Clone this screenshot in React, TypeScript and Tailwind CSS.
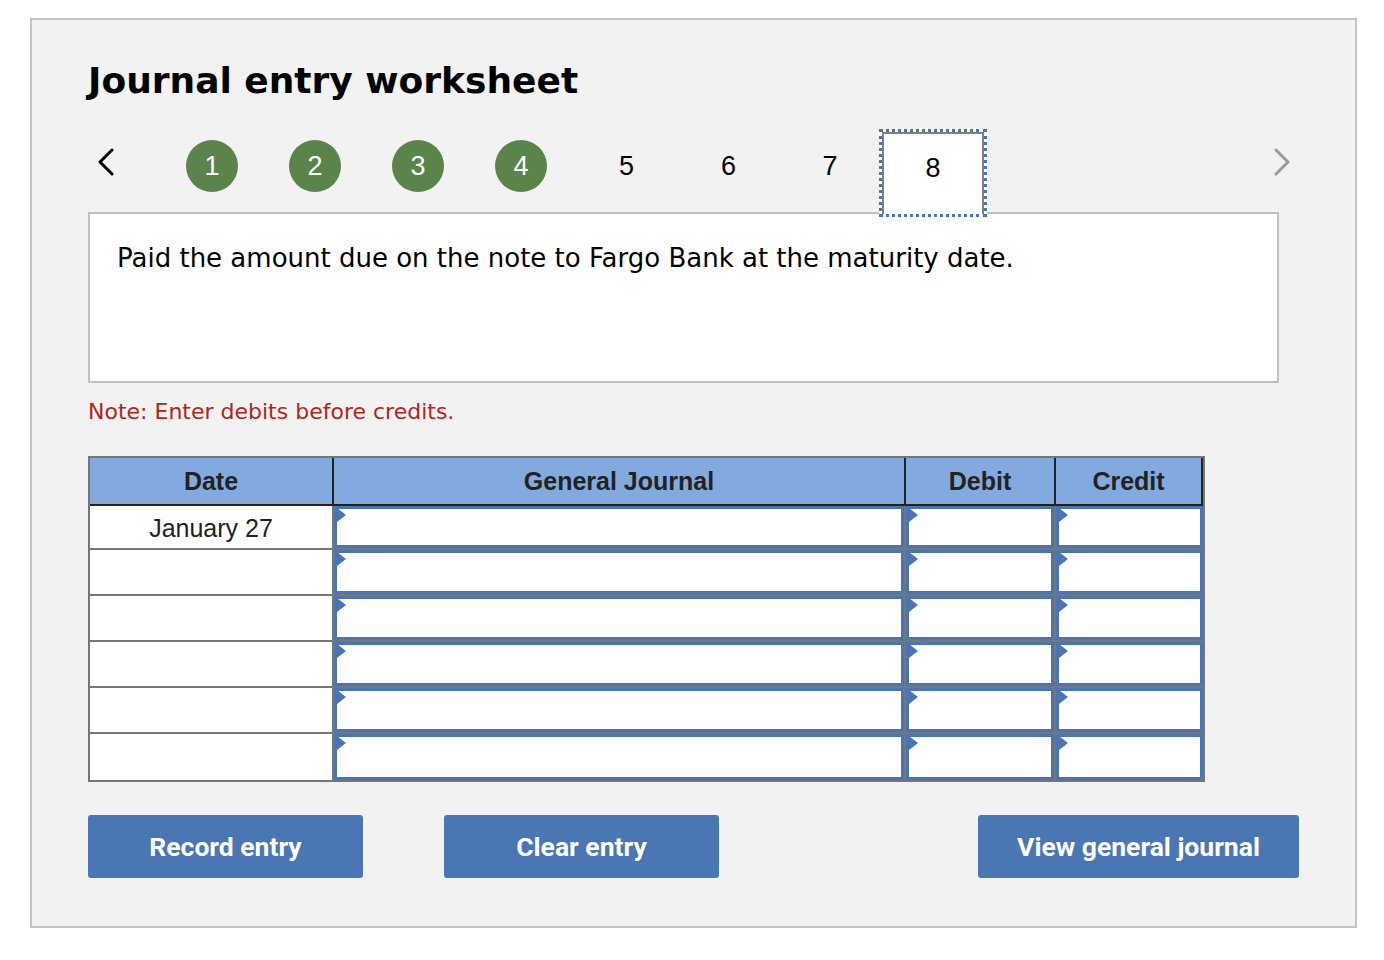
const steps = ['1', '2', '3', '4', '5', '6', '7', '8'];
const rows = ['January 27', '', '', '', '', ''];

function InputCell({ className }: { className: string }) {
  return (
    <div className={`${className} h-full`}>
      <div className="relative h-full border-[3px] border-[#4a75b5] bg-white">
        <span className="absolute left-0 -top-px h-0 w-0 border-y-[7px] border-l-[9px] border-y-transparent border-l-[#4a75b5]" />
      </div>
    </div>
  );
}

export default function App() {
  return (
    <div className="min-h-screen bg-white pl-[30px] pt-[18px]">
      <div className="flex w-[1327px] flex-col border-2 border-[#c4c4c4] bg-[#f2f2f2] px-[56px] pb-[48px] pt-[43px]">
        <h1 className="h-[36px] font-['DejaVu_Sans',sans-serif] text-[36px] font-bold leading-[36px] text-black">
          Journal entry worksheet
        </h1>

        <nav className="mt-[41px] flex h-[52px] items-center font-['Liberation_Sans',Arial,sans-serif] text-[27px]">
          <svg className="ml-[9px] -mt-[9px] h-[28px] w-[18px]" viewBox="0 0 18 28" fill="none">
            <polyline points="15,2 3,14 15,26" stroke="#000" strokeWidth="3" strokeLinecap="round" strokeLinejoin="round" />
          </svg>
          <div className="ml-[71px] flex items-center gap-[51px]">
            {steps.map((s, i) =>
              i < 4 ? (
                <div key={s} className="flex h-[52px] w-[52px] items-center justify-center rounded-full bg-[#5a8449] text-white">
                  {s}
                </div>
              ) : i < 7 ? (
                <div key={s} className={`flex w-[52px] justify-center text-black ${i === 4 ? 'pl-[5px]' : i === 5 ? 'pl-[3px]' : ''}`}>
                  {s}
                </div>
              ) : (
                <div
                  key={s}
                  className="relative z-10 -mx-[28px] -mb-[25px] -mt-[11px] h-[88px] w-[108px] border-[3px] border-dotted border-[#4a76b8] bg-white"
                >
                  <div className="flex h-full justify-center border-x-2 border-t-2 border-[#7f7f7f] pt-[14px] text-black">{s}</div>
                </div>
              ),
            )}
          </div>
          <svg className="ml-auto mr-[8px] -mt-[9px] h-[28px] w-[18px]" viewBox="0 0 18 28" fill="none">
            <polyline points="3,2 15,14 3,26" stroke="#9a9a9a" strokeWidth="3" strokeLinecap="round" strokeLinejoin="round" />
          </svg>
        </nav>

        <div className="mt-[20px] h-[171px] w-[1191px] border-2 border-[#c0c0c0] bg-white px-[27px] pt-[28px] font-['DejaVu_Sans',sans-serif] text-[26px] leading-[32px] text-black">
          Paid the amount due on the note to Fargo Bank at the maturity date.
        </div>

        <p className="mt-[16px] font-['DejaVu_Sans',sans-serif] text-[22px] leading-[26px] text-[#b0261c]">
          Note: Enter debits before credits.
        </p>

        <div className="mt-[31px] w-[1117px] border-2 border-[#767676] font-['Liberation_Sans',Arial,sans-serif] text-[#222]">
          <div className="flex h-[48px] border-b-2 border-[#222] bg-[#83aadf] text-[25px] font-bold leading-[46px]">
            <div className="w-[244px] border-r-2 border-[#222] text-center">Date</div>
            <div className="w-[572px] border-r-2 border-[#222] text-center">General Journal</div>
            <div className="w-[150px] border-r-2 border-[#222] text-center">Debit</div>
            <div className="flex-1 border-r-2 border-[#222] text-center">Credit</div>
          </div>
          <div className="flex flex-col divide-y-2 divide-[#767676]">
            {rows.map((d, i) => (
              <div key={i} className="flex h-[46px] bg-white first:h-[44px]">
                <div className="w-[244px] border-r-2 border-[#767676] text-center text-[25px] leading-[44px]">{d}</div>
                <InputCell className="w-[572px] border-r-2 border-[#767676]" />
                <InputCell className="w-[150px] border-r-2 border-[#767676]" />
                <InputCell className="flex-1" />
              </div>
            ))}
          </div>
        </div>

        <div className="mt-[33px] flex font-['Roboto',sans-serif] text-[26.5px] font-bold text-white">
          <button className="h-[63px] w-[275px] rounded-[3px] bg-[#4a76b4]">Record entry</button>
          <button className="ml-[81px] h-[63px] w-[275px] rounded-[3px] bg-[#4a76b4]">Clear entry</button>
          <button className="ml-auto h-[63px] w-[321px] rounded-[3px] bg-[#4a76b4]">View general journal</button>
        </div>
      </div>
    </div>
  );
}
